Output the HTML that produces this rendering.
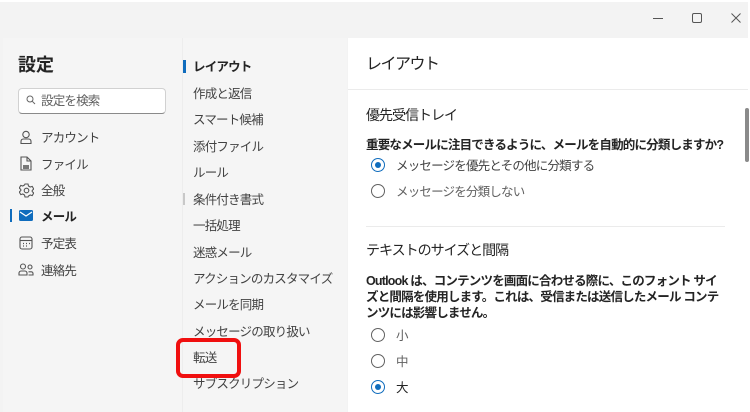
<!DOCTYPE html>
<html><head><meta charset="utf-8"><style>
*{margin:0;padding:0;box-sizing:border-box}
body{width:750px;height:412px;overflow:hidden;background:#f3f3f3;font-family:"Liberation Sans","Noto Sans CJK JP",sans-serif;color:#242424;position:relative}
.a{position:absolute;white-space:nowrap}
.t{font-size:12.5px;line-height:16px;letter-spacing:-0.8px}
.m{color:#424242}
.r{position:absolute;width:14px;height:14px;border:1.3px solid #616161;border-radius:50%}
.r.on{border-color:#0f6cbd}
.r.on:after{content:"";position:absolute;left:2.5px;top:2.5px;width:6.5px;height:6.5px;border-radius:50%;background:#0f6cbd}
</style></head><body>
<div class="a" style="left:0;top:0;width:750px;height:2px;background:#fff"></div>
<div class="a" style="left:748px;top:0;width:2px;height:412px;background:#fff"></div>
<div class="a" style="left:653px;top:18px;width:10px;height:1px;background:#555"></div>
<div class="a" style="left:692px;top:13px;width:10px;height:10px;border:1px solid #555;border-radius:2px"></div>
<svg class="a" style="left:731px;top:13px" width="10" height="10"><path d="M0.5 0.5L9.5 9.5M9.5 0.5L0.5 9.5" stroke="#555" stroke-width="1"/></svg>
<div class="a" style="left:3px;top:38px;width:344px;height:374px;background:#f5f5f5"></div>
<div class="a" style="left:182px;top:38px;width:1px;height:374px;background:#ededed"></div>
<div class="a" style="left:18px;top:54px;font-size:18px;font-weight:bold;line-height:22px">設定</div>
<div class="a" style="left:18px;top:88px;width:148px;height:26px;background:#fff;border:1px solid #d1d1d1;border-bottom-color:#8a8a8a;border-radius:4px"></div>
<svg class="a" style="left:26px;top:95px" width="10" height="10"><circle cx="4" cy="4" r="3" fill="none" stroke="#666" stroke-width="1"/><path d="M6.3 6.3L9 9" stroke="#666"/></svg>
<div class="a t" style="left:41px;top:93px;color:#616161">設定を検索</div>
<svg class="a" style="left:19px;top:130px" width="14" height="15" fill="none" stroke="#555" stroke-width="1.1"><circle cx="7" cy="4.5" r="3.2"/><path d="M2 13.5v-2c0-1.5 1-2.5 2.5-2.5h5c1.5 0 2.5 1 2.5 2.5v2z"/></svg>
<div class="a t m" style="left:41px;top:130px">アカウント</div>
<svg class="a" style="left:20px;top:156px" width="12" height="15" fill="none" stroke="#555" stroke-width="1.1"><path d="M1 1h6l4 4v9H1z M7 1v4h4"/><rect x="3" y="9" width="6" height="4" fill="#777" stroke="none"/></svg>
<div class="a t m" style="left:41px;top:157px">ファイル</div>
<svg class="a" style="left:19px;top:183px" width="15" height="15" fill="none" stroke="#555" stroke-width="1.1"><circle cx="7.5" cy="7.5" r="2.3"/><path d="M6 1h3l.5 2 1.7 1 2-.6 1.5 2.6-1.5 1.5v1l1.5 1.5-1.5 2.6-2-.6-1.7 1L9 14H6l-.5-2-1.7-1-2 .6L.3 9l1.5-1.5v-1L.3 5 1.8 2.4l2 .6 1.7-1z"/></svg>
<div class="a t m" style="left:41px;top:183px">全般</div>
<div class="a" style="left:10px;top:209px;width:2px;height:13px;background:#0f6cbd"></div>
<svg class="a" style="left:19px;top:210px" width="14" height="11"><rect x="0" y="0" width="14" height="11" rx="1.5" fill="#0f6cbd"/><path d="M1 2l6 4 6-4" stroke="#fff" stroke-width="1.2" fill="none"/></svg>
<div class="a t" style="left:41px;top:209px;font-weight:bold">メール</div>
<svg class="a" style="left:19px;top:236px" width="14" height="14" fill="none" stroke="#555" stroke-width="1.1"><rect x="1" y="1" width="12" height="12" rx="2"/><path d="M1 4.5h12"/><path d="M4 7.5h1M7 7.5h1M10 7.5h1M4 10h1M7 10h1" stroke-width="1.3"/></svg>
<div class="a t m" style="left:41px;top:236px">予定表</div>
<svg class="a" style="left:18px;top:263px" width="17" height="13" fill="none" stroke="#555" stroke-width="1.1"><circle cx="5" cy="3.5" r="2.5"/><circle cx="12" cy="4" r="2"/><path d="M1 12v-2c0-1 1-2 2-2h4c1 0 2 1 2 2v2zM10.5 12h4.5v-1.5c0-1-.8-1.7-1.7-1.7H10.5"/></svg>
<div class="a t m" style="left:41px;top:263px">連絡先</div>
<div class="a" style="left:183px;top:60px;width:3px;height:13px;background:#0f6cbd"></div>
<div class="a" style="left:183px;top:193px;width:2px;height:12px;background:#c8c8c8"></div>
<div class="a t" style="left:193px;top:59px;font-weight:bold">レイアウト</div>
<div class="a t m" style="left:193px;top:86px">作成と返信</div>
<div class="a t m" style="left:193px;top:112px">スマート候補</div>
<div class="a t m" style="left:193px;top:139px">添付ファイル</div>
<div class="a t m" style="left:193px;top:165px">ルール</div>
<div class="a t m" style="left:193px;top:192px">条件付き書式</div>
<div class="a t m" style="left:193px;top:218px">一括処理</div>
<div class="a t m" style="left:193px;top:245px">迷惑メール</div>
<div class="a t m" style="left:193px;top:271px">アクションのカスタマイズ</div>
<div class="a t m" style="left:193px;top:297px">メールを同期</div>
<div class="a t m" style="left:193px;top:324px">メッセージの取り扱い</div>
<div class="a t m" style="left:193px;top:350px">転送</div>
<div class="a t m" style="left:193px;top:376px">サブスクリプション</div>
<div class="a" style="left:176px;top:338px;width:65px;height:40px;border:4px solid #f00f0f;border-radius:7px"></div>
<div class="a" style="left:348px;top:38px;width:400px;height:374px;background:#fff"></div>
<div class="a" style="left:348px;top:89px;width:400px;height:1px;background:#ebebeb"></div>
<div class="a" style="left:366px;top:54px;font-size:16px;line-height:22px;letter-spacing:-1.5px">レイアウト</div>
<div class="a" style="left:745px;top:108px;width:4px;height:54px;background:#8a8a8a;border-radius:2px"></div>
<div class="a" style="left:366px;top:106px;font-size:14px;line-height:18px;letter-spacing:-1px">優先受信トレイ</div>
<div class="a t" style="left:366px;top:137px;font-weight:bold">重要なメールに注目できるように、メールを自動的に分類しますか?</div>
<div class="r on" style="left:371px;top:158px"></div>
<div class="a t m" style="left:396px;top:158px">メッセージを優先とその他に分類する</div>
<div class="r" style="left:371px;top:184px"></div>
<div class="a t m" style="left:396px;top:184px;color:#616161">メッセージを分類しない</div>
<div class="a" style="left:366px;top:226px;width:359px;height:1px;background:#ebebeb"></div>
<div class="a" style="left:366px;top:241px;font-size:14px;line-height:18px;letter-spacing:-1px">テキストのサイズと間隔</div>
<div class="a t" style="left:366px;top:273px;font-weight:bold">Outlook は、コンテンツを画面に合わせる際に、このフォント サイ<br>ズと間隔を使用します。これは、受信または送信したメール コンテ<br>ンツには影響しません。</div>
<div class="r" style="left:371px;top:328px"></div>
<div class="a t" style="left:396px;top:328px;color:#616161">小</div>
<div class="r" style="left:371px;top:354px"></div>
<div class="a t" style="left:396px;top:354px;color:#616161">中</div>
<div class="r on" style="left:371px;top:380px"></div>
<div class="a t" style="left:396px;top:380px">大</div>
</body></html>
